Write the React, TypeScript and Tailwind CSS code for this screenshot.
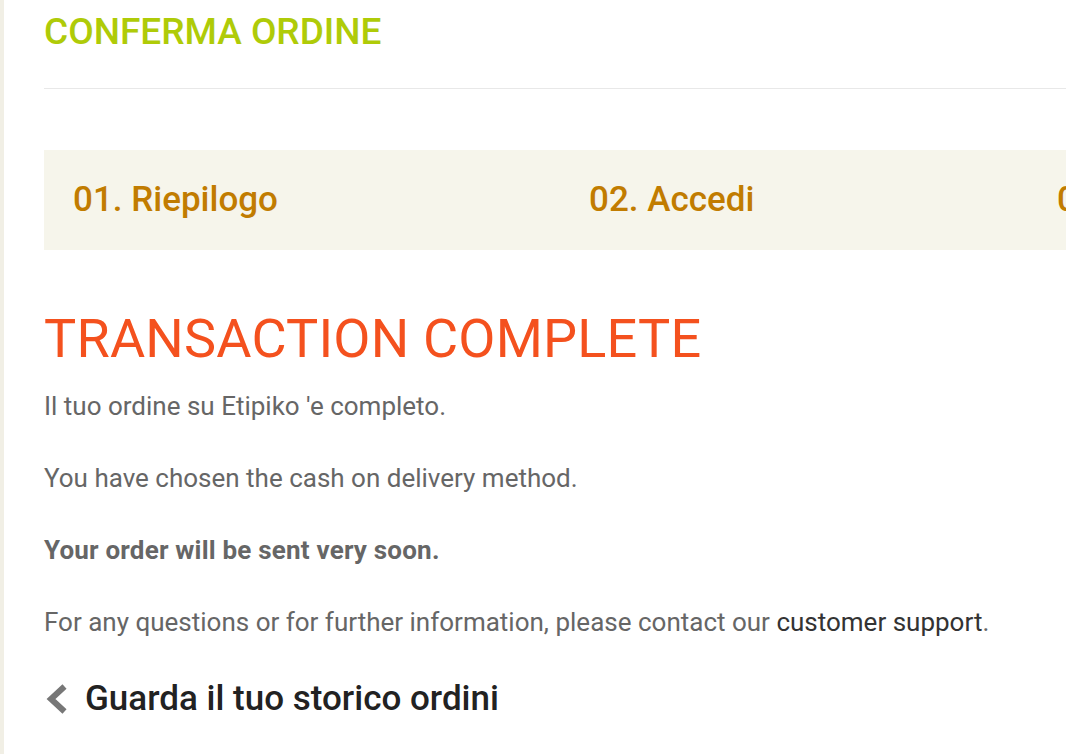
import React from 'react';

const steps = ['01. Riepilogo', '02. Accedi', '03. Pagamento'];

const ChevronLeft: React.FC<{ className?: string }> = ({ className }) => (
  <svg viewBox="0 0 22 30" className={className} fill="none">
    <path d="M18.5 2.5 L5 15 L18.5 27.5" stroke="currentColor" strokeWidth="6" strokeLinejoin="miter" />
  </svg>
);

export default function App() {
  return (
    <div className="min-h-[754px] w-[1066px] overflow-hidden bg-white flex font-['Roboto',sans-serif]">
      <div className="w-[4px] shrink-0 bg-[#f1efe5]" />
      <main className="flex-1 pl-[40px] min-w-0">
        <header className="pt-[10px] h-[89px] border-b border-[#e8e8e8]">
          <h1 className="text-[37px] leading-[44px] font-medium text-[#afcb08]">CONFERMA ORDINE</h1>
        </header>

        <nav className="mt-[61px] h-[100px] bg-[#f6f5eb] flex items-center pl-[29px] whitespace-nowrap overflow-hidden">
          {steps.map((s, i) => (
            <div
              key={s}
              className={i === 0 ? 'w-[516px] shrink-0' : 'w-[468px] shrink-0'}
            >
              <span className="text-[35px] font-medium text-[#c17c00]">{s}</span>
            </div>
          ))}
        </nav>

        <section className="pt-[57px]">
          <h2 className="text-[54px] leading-[64px] font-normal text-[#f4511e] tracking-[0.2px]">
            TRANSACTION COMPLETE
          </h2>
          <div className="text-[26px] leading-[32px] text-[#666666] mt-[19px] space-y-[40px]">
            <p>Il tuo ordine su Etipiko 'e completo.</p>
            <p>You have chosen the cash on delivery method.</p>
            <p className="font-bold tracking-[0.2px]">Your order will be sent very soon.</p>
            <p>
              For any questions or for further information, please contact our{' '}
              <a className="text-[#333333]">customer support</a>.
            </p>
          </div>
          <a className="mt-[41px] flex items-center gap-[17px] text-[#222222] pl-[2px]">
            <ChevronLeft className="w-[22px] h-[30px] text-[#777777]" />
            <span className="text-[35px] font-medium leading-[40px]">Guarda il tuo storico ordini</span>
          </a>
        </section>
      </main>
    </div>
  );
}
